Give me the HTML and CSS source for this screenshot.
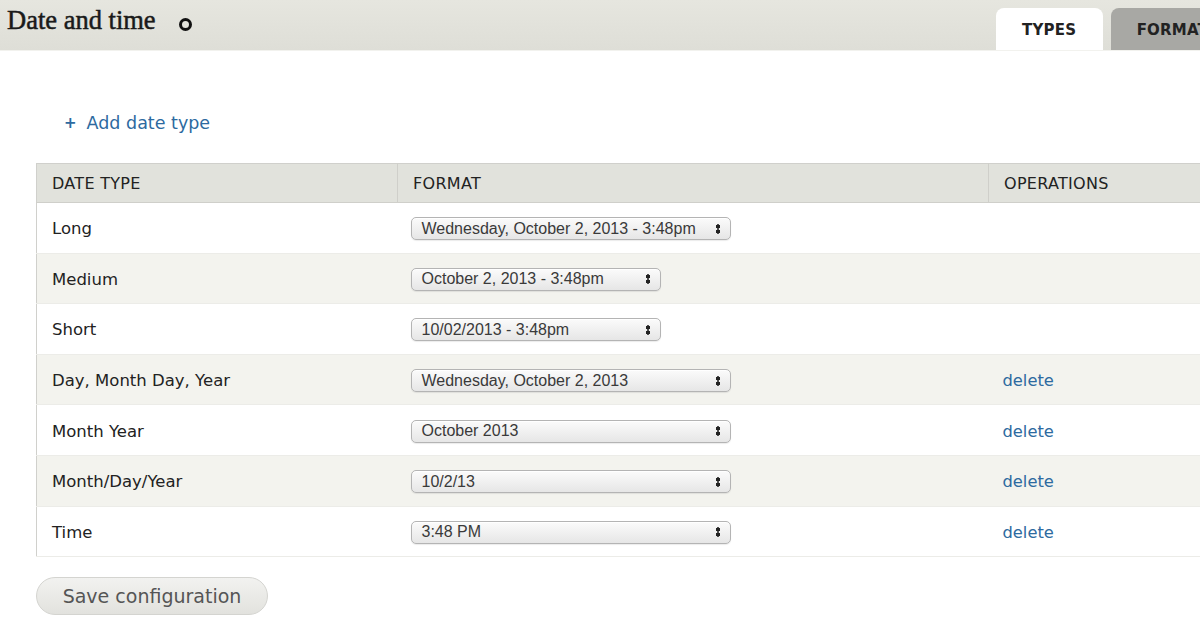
FILE: index.html
```html
<!DOCTYPE html>
<html>
<head>
<meta charset="utf-8">
<link rel="stylesheet" href="styles.css">
</head>
<body>
<header class="topbar">
  <div class="title-wrap">
    <h1 class="title">Date and time</h1>
    <span class="shortcut"></span>
  </div>
  <nav class="tabs">
    <a class="tab active">TYPES</a>
    <a class="tab">FORMATS</a>
  </nav>
</header>
<main class="content">
  <a class="add-link"><span class="plus">+</span>Add date type</a>
  <table class="grid">
    <thead>
      <tr><th class="c1">DATE TYPE</th><th class="c2">FORMAT</th><th class="c3">OPERATIONS</th></tr>
    </thead>
    <tbody>
      <tr><td>Long</td><td><span class="select w320"><span class="val">Wednesday, October 2, 2013 - 3:48pm</span><span class="arrows"></span></span></td><td></td></tr>
      <tr class="even"><td>Medium</td><td><span class="select w250"><span class="val">October 2, 2013 - 3:48pm</span><span class="arrows"></span></span></td><td></td></tr>
      <tr><td>Short</td><td><span class="select w250"><span class="val">10/02/2013 - 3:48pm</span><span class="arrows"></span></span></td><td></td></tr>
      <tr class="even"><td>Day, Month Day, Year</td><td><span class="select w320"><span class="val">Wednesday, October 2, 2013</span><span class="arrows"></span></span></td><td><a class="del">delete</a></td></tr>
      <tr><td>Month Year</td><td><span class="select w320"><span class="val">October 2013</span><span class="arrows"></span></span></td><td><a class="del">delete</a></td></tr>
      <tr class="even"><td>Month/Day/Year</td><td><span class="select w320"><span class="val">10/2/13</span><span class="arrows"></span></span></td><td><a class="del">delete</a></td></tr>
      <tr><td>Time</td><td><span class="select w320"><span class="val">3:48 PM</span><span class="arrows"></span></span></td><td><a class="del">delete</a></td></tr>
    </tbody>
  </table>
  <button class="save">Save configuration</button>
</main>
</body>
</html>
```
FILE: styles.css
```css
html, body {
  margin: 0;
  padding: 0;
  background: #ffffff;
  overflow: hidden;
}
body {
  width: 1200px;
  height: 627px;
  font-family: "DejaVu Sans", Verdana, sans-serif;
  color: #222;
}
.topbar {
  height: 51px;
  background: linear-gradient(#e6e6df, #deded7);
  display: flex;
  justify-content: space-between;
  align-items: flex-end;
  border-bottom: 1px solid #f2f2ee;
  box-sizing: border-box;
  overflow: hidden;
}
.title-wrap {
  align-self: stretch;
  display: flex;
  align-items: flex-start;
  padding: 4px 0 0 7px;
  gap: 23px;
}
.title {
  margin: 0;
  font-family: "Liberation Serif", "Times New Roman", serif;
  font-size: 26.5px;
  font-weight: normal;
  color: #1a1a1a;
  -webkit-text-stroke: 0.5px #1a1a1a;
  line-height: 32px;
}
.shortcut {
  width: 7px;
  height: 7px;
  border: 3px solid #111;
  border-radius: 50%;
  margin-top: 14px;
}
.tabs {
  display: flex;
  gap: 8px;
  margin-right: -45px;
  flex-shrink: 0;
}
.tab {
  display: block;
  height: 42px;
  box-sizing: border-box;
  padding: 13px 26px 0;
  font-size: 15px;
  font-weight: bold;
  letter-spacing: 0.2px;
  color: #222;
  background: #a8a8a4;
  border-radius: 8px 8px 0 0;
}
.tab.active {
  background: #ffffff;
  width: 107px;
  text-align: center;
  padding: 13px 0 0;
}
.content {
  padding: 0 0 0 36px;
}
.add-link {
  display: inline-flex;
  align-items: center;
  margin: 60px 0 0 28px;
  font-size: 17.5px;
  color: #2d6aa0;
  line-height: 24px;
}
.plus {
  font-weight: bold;
  font-size: 15px;
  margin-right: 10px;
}
.grid {
  margin-top: 28px;
  width: 1180px;
  border-collapse: collapse;
  border: 1px solid #d0d0cc;
  font-size: 16.5px;
}
.grid th {
  background: #e1e2dc;
  height: 38px;
  text-align: left;
  font-weight: normal;
  font-size: 16px;
  letter-spacing: 0.3px;
  color: #222;
  padding: 0 0 0 15px;
  border-bottom: 1px solid #cfcfca;
  border-right: 1px solid #cfcfca;
}
.grid th.c1 { width: 345px; }
.grid th.c2 { width: 575px; }
.grid td {
  height: 47.6px;
  padding: 2px 0 0 15px;
  border-bottom: 1px solid #ecece8;
  vertical-align: middle;
}
.grid td:nth-child(2) { padding-left: 13px; }
.grid td:nth-child(3) { padding-left: 14px; }
.grid tr.even td { background: #f3f3ee; }
.select {
  display: inline-flex;
  align-items: center;
  justify-content: space-between;
  height: 23px;
  box-sizing: border-box;
  border: 1px solid #b4b4b4;
  border-radius: 5px;
  background: linear-gradient(#fbfbfb, #e6e6e6);
  box-shadow: inset 0 1px 0 #fff, 0 1px 1px rgba(0,0,0,0.08);
  padding: 0 9px 0 10px;
  font-family: "Liberation Sans", Arial, sans-serif;
  font-size: 16px;
  color: #3a3a3a;
  vertical-align: middle;
}
.w320 { width: 320px; }
.w250 { width: 250px; }
.arrows {
  width: 6px;
  height: 10px;
  background:
    radial-gradient(circle at 3px 2.5px, #222 2px, transparent 2.3px),
    radial-gradient(circle at 3px 7.5px, #222 2px, transparent 2.3px);
}
.del {
  color: #2d6aa0;
  font-size: 16.3px;
}
.save {
  margin-top: 20px;
  width: 232px;
  height: 38px;
  border: 1px solid #d4d4d0;
  border-radius: 19px;
  background: linear-gradient(#f2f2f0, #e2e2de);
  font-family: "DejaVu Sans", Verdana, sans-serif;
  font-size: 19px;
  color: #555;
  padding: 0;
}
```
